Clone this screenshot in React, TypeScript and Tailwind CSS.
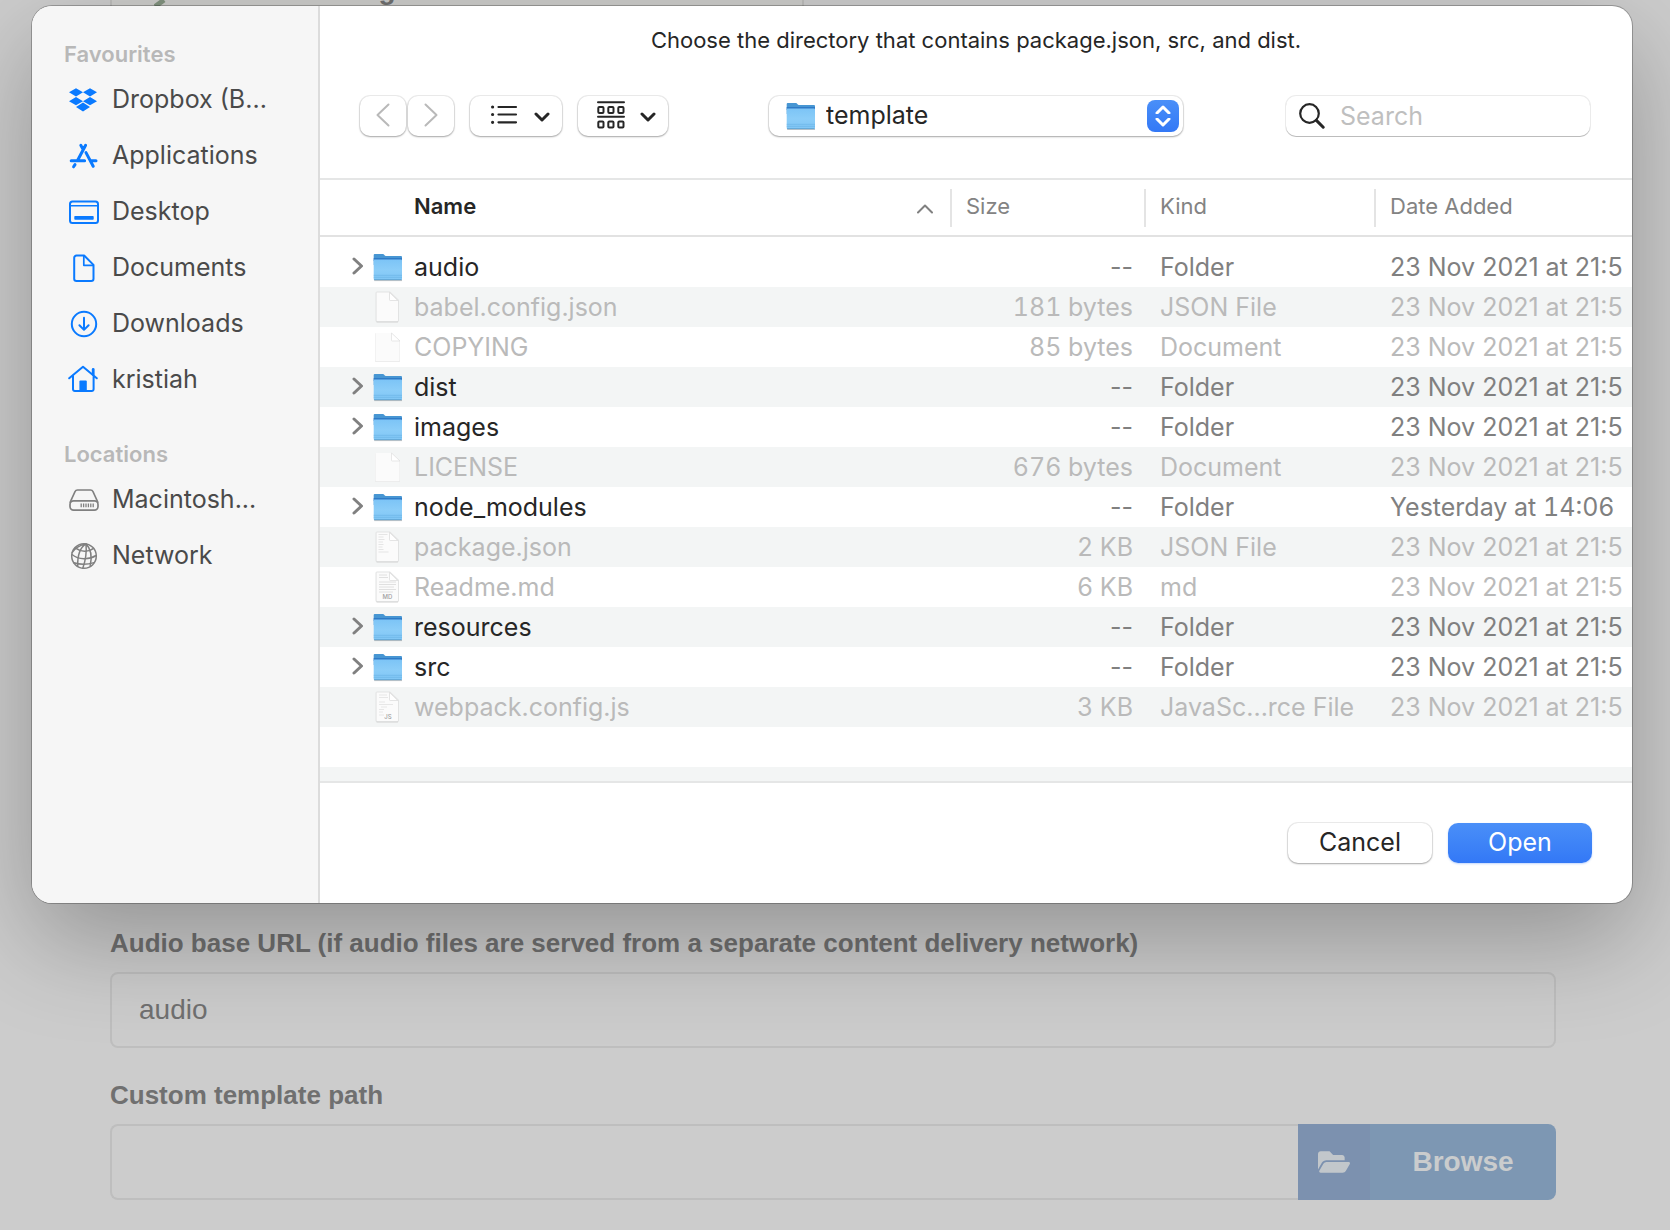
import { useId, type ReactNode } from "react";
import { FaFolderOpen } from "react-icons/fa";

function SidebarIcon({ children }: { children: ReactNode }) {
  return (
    <svg
      viewBox="0 0 32 32"
      className="size-8 shrink-0"
      fill="none"
      stroke="currentColor"
      strokeWidth="2"
      strokeLinecap="round"
      strokeLinejoin="round"
      aria-hidden="true"
    >
      {children}
    </svg>
  );
}

const DropboxIcon = () => (
  <SidebarIcon>
    <path
      d="M8 4.3l7 4-7 4.1-7-4.1zM22 4.3l7 4-7 4.1-7-4.1zM8 13l7 4.2-7 4.1-7-4.1zM22 13l7 4.2-7 4.1-7-4.1zM15 18.6l7 4.4-7 4.6L8 23z"
      fill="currentColor"
      stroke="none"
    />
  </SidebarIcon>
);

const ApplicationsIcon = () => (
  <SidebarIcon>
    <path
      d="M17.6 5.3L9.8 20M12.8 5.3l1.8 3.2M3.2 20.7h13.4M18 12.6l7.2 13.7M22.6 20.7H28M7 24.6l-1.4 2.2"
      strokeWidth="3"
    />
  </SidebarIcon>
);

const DesktopIcon = () => (
  <SidebarIcon>
    <rect x="2" y="5.5" width="28" height="21.5" rx="2.5" />
    <path d="M2 9.8h28" strokeWidth="1.6" />
    <rect x="6.3" y="20" width="19.4" height="3.8" rx="0.8" fill="currentColor" stroke="none" />
  </SidebarIcon>
);

const DocumentsIcon = () => (
  <SidebarIcon>
    <path d="M8.5 3.5h7.6l9.4 9.4v13.8a2.3 2.3 0 0 1-2.3 2.3H8.5a2.3 2.3 0 0 1-2.3-2.3V5.8a2.3 2.3 0 0 1 2.3-2.3z" />
    <path d="M15.8 4v9.3h9.4" strokeWidth="1.7" />
  </SidebarIcon>
);

const DownloadsIcon = () => (
  <SidebarIcon>
    <circle cx="16" cy="16" r="12.2" />
    <path d="M16 9.8v12M11.4 17.3l4.6 4.6 4.6-4.6" />
  </SidebarIcon>
);

const HomeIcon = () => (
  <SidebarIcon>
    <path d="M1.2 14.3L15 2.7l13.8 11.6M5 12v13.2a1.8 1.8 0 0 0 1.8 1.8h17a1.8 1.8 0 0 0 1.8-1.8V12" />
    <path d="M25.2 5.5v5" strokeWidth="2.8" />
    <path d="M11.4 17.5a1 1 0 0 1 1-1h5.4a1 1 0 0 1 1 1V27h-7.4z" fill="currentColor" stroke="none" />
  </SidebarIcon>
);

const DriveIcon = () => (
  <SidebarIcon>
    <path
      d="M2.2 18.2L7 7.6A2.8 2.8 0 0 1 9.5 6h13A2.8 2.8 0 0 1 25 7.6l4.8 10.6"
      strokeWidth="1.6"
    />
    <rect x="2" y="16.8" width="28" height="9.3" rx="3.6" strokeWidth="1.7" />
    <path
      d="M13.2 19.4v3.9M15.6 19.4v3.9M18 19.4v3.9M20.4 19.4v3.9M22.8 19.4v3.9M25.2 19.4v3.9"
      strokeWidth="1.3"
      strokeLinecap="butt"
    />
  </SidebarIcon>
);

const NetworkIcon = () => (
  <SidebarIcon>
    <g strokeWidth="1.5">
      <circle cx="16" cy="16" r="12.3" />
      <path d="M18 3.9c-5 3-8.6 10.5-8.3 22.4M18 3.9c-6.5.8-12.2 5.3-13.8 8.6M18 3.9c.6 6-.1 15.500-3.200 24.300M18 3.900c4.600 4.500 6.200 12.500 4.200 21.800" />
      <path d="M7.200 7.800c5.500 4.200 13.300 4.600 18.400.5M4 14.500c6.500 5.300 17 5.500 24.100 1M5.800 22.800c6 1.900 13.700 1.900 20.300-.2" />
    </g>
  </SidebarIcon>
);

function FolderIcon() {
  const id = useId();
  return (
    <svg viewBox="0 0 30 30" className="size-[30px] shrink-0" aria-hidden="true">
      <defs>
        <linearGradient id={id} x1="0" y1="0" x2="0" y2="1">
          <stop offset="0" stopColor="#7cc4f6" />
          <stop offset="0.5" stopColor="#8bcdf8" />
          <stop offset="1" stopColor="#80c6f5" />
        </linearGradient>
      </defs>
      <path d="M1.200 27.900h27.800v1.200H1.200z" fill="#000" opacity="0.22" />
      <path d="M.7 3a1 1 0 0 1 1-1h8.200c1.300 0 1.600 2 3 2h15.100a1 1 0 0 1 1 1v8H.7z" fill="#4796d3" />
      <path d="M.7 6h28.300v3H.7z" fill="#2f7ac6" />
      <path d="M.7 8.500a1 1 0 0 1 1-1H28a1 1 0 0 1 1 1v18.600a1 1 0 0 1-1 1H1.700a1 1 0 0 1-1-1z" fill={`url(#${id})`} />
      <path d="M.7 23.300h28.300M.7 25.300h28.300" stroke="#66b1e4" strokeWidth="0.600" />
      <path d="M1 27.700h27.700" stroke="#5c9fce" strokeWidth="0.900" />
    </svg>
  );
}

type FileLook = "framed" | "plain" | "text" | "md" | "js";

function FileIcon({ look }: { look: FileLook }) {
  return (
    <svg
      viewBox="0 0 30 34"
      className="h-[34px] w-[30px] shrink-0"
      fontFamily="Inter, sans-serif"
      aria-hidden="true"
    >
      {look === "plain" ? (
        <>
          <path d="M3 3h15.500l8.500 8v20a1 1 0 0 1-1 1H3a1 1 0 0 1-1-1V4a1 1 0 0 1 1-1z" fill="#e9e9e9" />
          <path d="M3 3h15.500l8 8v19.200a1 1 0 0 1-1 1H3.500a1 1 0 0 1-1-1V3.500z" fill="#fbfbfb" />
          <path d="M18.500 3v7.200a.8.8 0 0 0 .8.800H27z" fill="#fff" stroke="#dedede" strokeWidth="0.700" />
        </>
      ) : (
        <>
          <path d="M4 1.500h13l9 8.500v20.500a1.800 1.800 0 0 1-1.800 1.800H4.300a1.800 1.800 0 0 1-1.800-1.800V3a1.500 1.500 0 0 1 1.500-1.500z" fill="#e2e3e3" />
          <path d="M3.600 2.400h12.900l8.500 8v19.800a1 1 0 0 1-1 1H4.600a1 1 0 0 1-1-1z" fill="#fbfbfb" />
          <path d="M16.500 2.400v7.300a.8.8 0 0 0 .8.800h7.400z" fill="#fff" stroke="#d9d9d9" strokeWidth="0.700" />
          <path d="M3.500 32h21.500" stroke="#cfcfcf" strokeWidth="0.800" />
        </>
      )}
      {look === "text" && (
        <path d="M5.500 4.500h9M5.500 7h5M5.500 9.500h6M5.500 12h4.500M5.500 14.500h5M5.500 17h4M5.500 19.500h5M5.500 22h10" stroke="#e2e2e2" strokeWidth="0.900" />
      )}
      {look === "md" && (
        <>
          <path d="M6 5h8M6 7.500h9M6 12h17M6 14.500h17M6 17h15M6 19.500h17M6 22h14" stroke="#e0e0e0" strokeWidth="1" />
          <text x="14.500" y="28.500" fontSize="6" fontWeight="500" textAnchor="middle" fill="#a0a0a0">MD</text>
        </>
      )}
      {look === "js" && (
        <>
          <path d="M6 5h8M6 7.500h9M6 12h6M6 14.500h14M8 17h6M6 19.500h5M6 22h4M6 25h5" stroke="#e4e4e4" strokeWidth="0.900" />
          <text x="15" y="28.500" fontSize="6" fontWeight="500" textAnchor="middle" fill="#a0a0a0">JS</text>
        </>
      )}
    </svg>
  );
}

function Chevron({ className, d, width, height, stroke }: { className: string; d: string; width: number; height: number; stroke: number }) {
  return (
    <svg
      viewBox={`0 0 ${width} ${height}`}
      width={width}
      height={height}
      className={className}
      fill="none"
      stroke="currentColor"
      strokeWidth={stroke}
      strokeLinecap="round"
      strokeLinejoin="round"
      aria-hidden="true"
    >
      <path d={d} />
    </svg>
  );
}

const favourites = [
  { label: "Dropbox (B...", icon: <DropboxIcon /> },
  { label: "Applications", icon: <ApplicationsIcon /> },
  { label: "Desktop", icon: <DesktopIcon /> },
  { label: "Documents", icon: <DocumentsIcon /> },
  { label: "Downloads", icon: <DownloadsIcon /> },
  { label: "kristiah", icon: <HomeIcon /> },
];

const locations = [
  { label: "Macintosh...", icon: <DriveIcon /> },
  { label: "Network", icon: <NetworkIcon /> },
];

type Entry = { name: string; size: string; kind: string; date: string; look?: FileLook };

const ADDED = "23 Nov 2021 at 21:5";

const entries: Entry[] = [
  { name: "audio", size: "--", kind: "Folder", date: ADDED },
  { name: "babel.config.json", size: "181 bytes", kind: "JSON File", date: ADDED, look: "framed" },
  { name: "COPYING", size: "85 bytes", kind: "Document", date: ADDED, look: "plain" },
  { name: "dist", size: "--", kind: "Folder", date: ADDED },
  { name: "images", size: "--", kind: "Folder", date: ADDED },
  { name: "LICENSE", size: "676 bytes", kind: "Document", date: ADDED, look: "plain" },
  { name: "node_modules", size: "--", kind: "Folder", date: "Yesterday at 14:06" },
  { name: "package.json", size: "2 KB", kind: "JSON File", date: ADDED, look: "text" },
  { name: "Readme.md", size: "6 KB", kind: "md", date: ADDED, look: "md" },
  { name: "resources", size: "--", kind: "Folder", date: ADDED },
  { name: "src", size: "--", kind: "Folder", date: ADDED },
  { name: "webpack.config.js", size: "3 KB", kind: "JavaSc...rce File", date: ADDED, look: "js" },
];

function SidebarGroup({ title, items, iconColor }: { title: string; items: { label: string; icon: ReactNode }[]; iconColor: string }) {
  return (
    <section>
      <h2 className="pb-[2px] pl-8 text-[22px] leading-8 font-semibold text-[#b8b8b8]">{title}</h2>
      <ul>
        {items.map((item) => (
          <li key={item.label}>
            <a href="#" className="flex h-14 items-center gap-3 pl-9 text-[25px] whitespace-nowrap text-[#4a4a4a]">
              <span className={iconColor}>{item.icon}</span>
              {item.label}
            </a>
          </li>
        ))}
      </ul>
    </section>
  );
}

const control =
  "flex h-10 items-center rounded-[10px] bg-white shadow-[0_0_0_1px_rgba(0,0,0,0.07),0_1px_2px_rgba(0,0,0,0.3)]";

function Toolbar() {
  return (
    <div className="flex h-[82px] items-start pr-[42px] pl-10">
      <div className="flex gap-[2px]">
        <button type="button" aria-label="Back" className={`${control} w-[46px] justify-center pb-[2px] text-[#b9b9b9]`}>
          <Chevron className="" d="M12.500 1.500L1.500 12l11 10.500" width={14} height={24} stroke={2} />
        </button>
        <button type="button" aria-label="Forward" className={`${control} w-[46px] justify-center pb-[2px] text-[#b9b9b9]`}>
          <Chevron className="" d="M1.500 1.500l11 10.500-11 10.500" width={14} height={24} stroke={2} />
        </button>
      </div>
      <button type="button" aria-label="List view" className={`${control} ml-4 w-[92px] justify-between pr-3 pb-[2px] pl-5 text-[#262626]`}>
        <svg viewBox="0 0 28 22" className="h-[22px] w-7" fill="none" stroke="currentColor" aria-hidden="true">
          <path d="M8.500 3H26M8.500 10.500H26M8.500 18.300H26" strokeWidth="2.200" strokeLinecap="round" />
          <path d="M2.600 3h.01M2.600 10.500h.01M2.600 18.300h.01" strokeWidth="3.200" strokeLinecap="round" />
        </svg>
        <Chevron className="mt-1" d="M2 2l6 6 6-6" width={16} height={10} stroke={3} />
      </button>
      <button type="button" aria-label="Group items" className={`${control} ml-4 w-[90px] justify-between pr-3 pb-[2px] pl-[18px] text-[#262626]`}>
        <svg viewBox="0 0 30 30" className="size-[30px]" fill="none" stroke="currentColor" strokeWidth="2" aria-hidden="true">
          <path d="M2 2.300h26M2 16.800h26" strokeLinecap="round" />
          <rect x="2.300" y="7" width="5.200" height="6" rx="1" />
          <rect x="12.300" y="7" width="5.200" height="6" rx="1" />
          <rect x="22.300" y="7" width="5.200" height="6" rx="1" />
          <rect x="2.300" y="21.500" width="5.200" height="6" rx="1" />
          <rect x="12.300" y="21.500" width="5.200" height="6" rx="1" />
          <rect x="22.300" y="21.500" width="5.200" height="6" rx="1" />
        </svg>
        <Chevron className="mt-1" d="M2 2l6 6 6-6" width={16} height={10} stroke={3} />
      </button>
      <div className="flex flex-1 justify-center pr-[2px]">
        <div className="relative w-[414px]">
          <select
            aria-label="Current folder"
            defaultValue="template"
            className={`${control} w-full appearance-none pr-12 pl-[57px] text-[25px] text-[#262626]`}
          >
            <option value="template">template</option>
          </select>
          <span className="pointer-events-none absolute top-[5px] left-[17px]">
            <FolderIcon />
          </span>
          <span className="pointer-events-none absolute top-1 right-1 flex size-8 flex-col items-center justify-center gap-1 rounded-lg bg-gradient-to-b from-[#4a8ff8] to-[#3378f6] text-white">
            <Chevron className="" d="M2 8l6-6 6 6" width={16} height={9} stroke={3} />
            <Chevron className="" d="M2 1l6 6 6-6" width={16} height={9} stroke={3} />
          </span>
        </div>
      </div>
      <label className="flex h-10 w-[304px] items-center gap-[15px] rounded-[10px] bg-white pl-[13px] shadow-[0_0_0_1px_rgba(0,0,0,0.08),0_1px_0_0_rgba(0,0,0,0.2)]">
        <svg viewBox="0 0 26 26" className="size-[26px] shrink-0" fill="none" stroke="#262626" aria-hidden="true">
          <circle cx="10.500" cy="10.500" r="9.300" strokeWidth="2.200" />
          <path d="M17.400 17.400l6.800 6.800" strokeWidth="3" strokeLinecap="round" />
        </svg>
        <input
          type="search"
          aria-label="Search"
          placeholder="Search"
          className="w-full min-w-0 bg-transparent pt-[2px] text-[25px] outline-none placeholder:text-[#bfbfbf]"
        />
      </label>
    </div>
  );
}

function HeaderCell({ label }: { label: string }) {
  return (
    <th scope="col" className="p-0 font-normal text-[#838383]">
      <div className="flex h-[38px] items-center border-l-2 border-[#e4e4e4] pb-[2px] pl-[14px]">{label}</div>
    </th>
  );
}

function FileTable() {
  return (
    <div className="overflow-hidden border-y-2 border-[#e5e6e6]">
      <table className="w-full table-fixed border-collapse text-left whitespace-nowrap">
        <colgroup>
          <col />
          <col className="w-[194px]" />
          <col className="w-[230px]" />
          <col className="w-[258px]" />
        </colgroup>
        <thead className="text-[22px]">
          <tr className="h-14 border-b-2 border-[#e2e2e2]">
            <th scope="col" className="p-0 font-semibold text-[#262626]">
              <div className="flex items-center justify-between pr-[17px] pb-[2px] pl-[94px]">
                Name
                <Chevron className="mt-1 text-[#808080]" d="M1 8.500L8 1.500l7 7" width={16} height={10} stroke={2} />
              </div>
            </th>
            <HeaderCell label="Size" />
            <HeaderCell label="Kind" />
            <HeaderCell label="Date Added" />
          </tr>
        </thead>
        <tbody className="text-[25px] leading-[38px] before:block before:h-[10px]">
          {entries.map((entry) => {
            const folder = !entry.look;
            return (
              <tr key={entry.name} className={`h-10 even:bg-[#f3f5f5] ${folder ? "text-[#808080]" : "text-[#bababa]"}`}>
                <td className="p-0">
                  <div className="flex h-10 items-center pl-8">
                    {folder ? (
                      <button type="button" aria-label={`Expand ${entry.name}`} className="w-[21px] pb-[2px] text-[#808080]">
                        <Chevron className="" d="M2 2l7.500 7L2 16" width={12} height={18} stroke={3} />
                      </button>
                    ) : (
                      <span className="w-[21px]" />
                    )}
                    {entry.look ? <FileIcon look={entry.look} /> : <FolderIcon />}
                    <span className={`pl-[11px] ${folder ? "text-[#262626]" : ""}`}>{entry.name}</span>
                  </div>
                </td>
                <td className={`p-0 pr-[11px] text-right ${folder ? "" : "tabular-nums"}`}>{entry.size}</td>
                <td className="p-0 pl-4">{entry.kind}</td>
                <td className={`overflow-hidden p-0 pl-4 ${entry.date === ADDED ? "" : "tabular-nums"}`}>{entry.date}</td>
              </tr>
            );
          })}
        </tbody>
      </table>
      <div className="mt-10 h-[14px] bg-[#f3f5f5]" />
    </div>
  );
}

function OpenDialog() {
  return (
    <div
      role="dialog"
      aria-label="Choose the directory that contains package.json, src, and dist."
      className="absolute top-[6px] right-[38px] left-8 flex overflow-hidden rounded-[20px] bg-white font-[Inter,sans-serif] shadow-[0_0_0_1px_rgba(0,0,0,0.25),0_36px_100px_rgba(0,0,0,0.28)]"
    >
      <nav aria-label="Places" className="flex w-72 shrink-0 flex-col gap-[30px] border-r-2 border-[#dcdcdc] bg-[#f6f6f6] pt-8">
        <SidebarGroup title="Favourites" items={favourites} iconColor="text-[#0a7aff]" />
        <SidebarGroup title="Locations" items={locations} iconColor="text-[#808080]" />
      </nav>
      <div className="min-w-0 flex-1">
        <p className="pt-[14px] pb-9 text-center text-[22px] leading-10 text-[#262626]">
          Choose the directory that contains package.json, src, and dist.
        </p>
        <Toolbar />
        <FileTable />
        <div className="flex justify-end gap-4 pt-10 pr-10 pb-10 text-[25px]">
          <button type="button" className={`${control} w-36 justify-center text-[#262626]`}>
            Cancel
          </button>
          <button
            type="button"
            className="flex h-10 w-36 items-center justify-center rounded-[10px] bg-gradient-to-b from-[#4a8ff8] to-[#3378f6] text-white shadow-[0_1px_2px_rgba(51,120,246,0.3)]"
          >
            Open
          </button>
        </div>
      </div>
    </div>
  );
}

export default function App() {
  return (
    <div className="relative flex min-h-screen flex-col justify-between overflow-hidden bg-[#cccccc] font-['Liberation_Sans',sans-serif] text-[#707070]">
      <div className="ml-[110px] flex h-[6px] w-[694px] items-end gap-[105px] overflow-hidden border-x-2 border-[#bcbcba] bg-[#ccccca] pl-[42px]">
        <svg viewBox="0 0 12 6" className="h-[6px] w-3" aria-hidden="true">
          <path d="M1 6.500L10 0" stroke="#82937f" strokeWidth="5" />
        </svg>
        <span className="text-[28px] leading-8 font-bold whitespace-nowrap">Use image file</span>
      </div>
      <form className="flex flex-col gap-[27px] pr-[114px] pb-[30px] pl-[110px]">
        <div>
          <label htmlFor="audio-url" className="mb-[9px] block text-[26px] leading-10 font-bold">
            Audio base URL (if audio files are served from a separate content delivery network)
          </label>
          <input
            id="audio-url"
            type="text"
            defaultValue="audio"
            className="block h-[76px] w-full rounded-lg border-2 border-[#bebebe] bg-transparent px-[27px] text-[28px] outline-none"
          />
        </div>
        <div>
          <label htmlFor="template-path" className="mb-[9px] block text-[26px] leading-10 font-bold">
            Custom template path
          </label>
          <div className="flex h-[76px]">
            <input
              id="template-path"
              type="text"
              className="min-w-0 flex-1 rounded-l-lg border-2 border-r-0 border-[#bebebe] bg-transparent px-[27px] text-[28px] outline-none"
            />
            <button type="button" className="flex w-[258px] overflow-hidden rounded-r-lg bg-[#7d97b3] text-[28px] font-bold text-[#cacccd]">
              <span className="flex w-[72px] items-center justify-center self-stretch bg-[#7c91af] text-[#c2c7cb]">
                <FaFolderOpen className="size-8" />
              </span>
              <span className="flex-1 self-center">Browse</span>
            </button>
          </div>
        </div>
      </form>
      <OpenDialog />
    </div>
  );
}
